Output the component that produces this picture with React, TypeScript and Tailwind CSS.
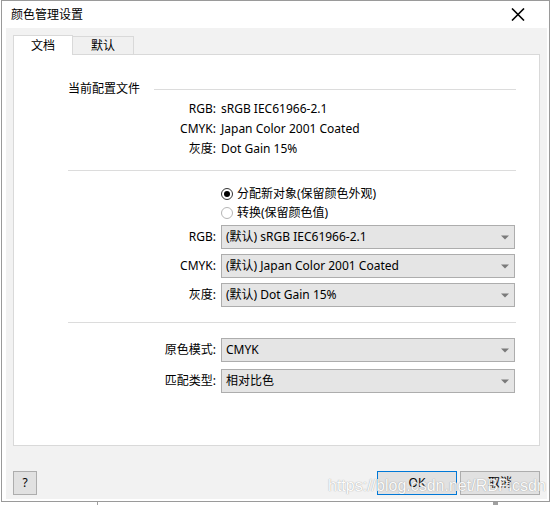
import React from "react";

const FONT = { fontFamily: '"Noto Sans", "Noto Sans CJK SC", sans-serif' };

function Arrow() {
  return (
    <svg width="8" height="5" viewBox="0 0 8 5" className="shrink-0">
      <path d="M0 0.5 H8 L4 4.5 Z" fill="#7a7a7a" />
    </svg>
  );
}

function Select({ text, h = "h-[24px]" }: { text: string; h?: string }) {
  return (
    <div
      className={`w-[294px] ${h} border border-[#adadad] bg-[#e5e5e5] flex items-center justify-between pl-[4px] pr-[5px] text-[12px] text-black`}
    >
      <span className="whitespace-nowrap">{text}</span>
      <Arrow />
    </div>
  );
}

function LabelRow({
  label,
  children,
  h,
}: {
  label: string;
  children: React.ReactNode;
  h: string;
}) {
  return (
    <div className={`flex items-center ${h}`}>
      <div className="w-[148px] text-right text-[12px] text-black whitespace-nowrap">
        {label}
      </div>
      <div className="ml-[5px] flex items-center">{children}</div>
    </div>
  );
}

function Radio({ checked, label }: { checked: boolean; label: string }) {
  return (
    <div className="flex items-center h-[19px] pl-[153px]">
      <div
        className={`w-[12px] h-[12px] rounded-full border flex items-center justify-center bg-white ${
          checked ? "border-[#333333]" : "border-[#b5b5b5]"
        }`}
      >
        {checked && <div className="w-[6px] h-[6px] rounded-full bg-black" />}
      </div>
      <span className="ml-[4px] text-[12px] text-black whitespace-nowrap">{label}</span>
    </div>
  );
}

export default function App() {
  return (
    <div className="w-[551px] h-[505px] bg-white flex flex-col overflow-hidden relative" style={FONT}>
      <div className="ml-[1px] w-[549px] h-[502px] border border-[#9a9a9a] flex flex-col bg-white">
        {/* title bar */}
        <div className="h-[27px] flex items-center justify-between pl-[9px] pr-[24px] shrink-0">
          <span className="text-[12px] text-black leading-none">颜色管理设置</span>
          <svg width="14" height="13" viewBox="0 0 14 13">
            <path d="M1 0.5 L13 12.5 M13 0.5 L1 12.5" stroke="#000" strokeWidth="1.6" />
          </svg>
        </div>
        {/* body */}
        <div className="flex-1 ml-[4px] mr-[2px] mb-[2px] bg-[#f2f2f2] flex flex-col pl-[7px] pr-[7px] pt-[7px] pb-[4px]">
          {/* tabs */}
          <div className="flex items-end h-[19px] relative z-10">
            <div className="w-[60px] h-[20px] mb-[-1px] bg-white border border-b-0 border-[#d9d9d9] flex items-center justify-center text-[12px] text-black">
              文档
            </div>
            <div className="w-[61px] h-[18px] bg-[#f0f0f0] border border-l-0 border-b-0 border-[#d9d9d9] flex items-center justify-center text-[12px] text-black">
              默认
            </div>
          </div>
          {/* panel */}
          <div className="h-[392px] bg-white border border-[#d9d9d9] flex flex-col pl-[54px] pr-[23px] pt-[24px]">
            <div className="flex items-center h-[20px]">
              <span className="text-[12px] text-black whitespace-nowrap">当前配置文件</span>
              <div className="flex-1 ml-[14px] h-px bg-[#dcdcdc]" />
            </div>
            <LabelRow label="RGB:" h="h-[20px]">
              <span className="text-[12px] text-black">sRGB IEC61966-2.1</span>
            </LabelRow>
            <LabelRow label="CMYK:" h="h-[20px]">
              <span className="text-[12px] text-black">Japan Color 2001 Coated</span>
            </LabelRow>
            <LabelRow label="灰度:" h="h-[20px]">
              <span className="text-[12px] text-black">Dot Gain 15%</span>
            </LabelRow>
            <div className="mt-[11px] h-px bg-[#dcdcdc]" />
            <div className="mt-[13px] flex flex-col">
              <Radio checked label="分配新对象(保留颜色外观)" />
              <Radio checked={false} label="转换(保留颜色值)" />
            </div>
            <div className="mt-[3px] flex flex-col gap-[5px]">
              <LabelRow label="RGB:" h="h-[24px]">
                <Select text="(默认) sRGB IEC61966-2.1" />
              </LabelRow>
              <LabelRow label="CMYK:" h="h-[24px]">
                <Select text="(默认) Japan Color 2001 Coated" />
              </LabelRow>
              <LabelRow label="灰度:" h="h-[24px]">
                <Select text="(默认) Dot Gain 15%" />
              </LabelRow>
            </div>
            <div className="mt-[15px] h-px bg-[#dcdcdc]" />
            <div className="mt-[15px] flex flex-col gap-[7px]">
              <LabelRow label="原色模式:" h="h-[24px]">
                <Select text="CMYK" />
              </LabelRow>
              <LabelRow label="匹配类型:" h="h-[24px]">
                <Select text="相对比色" />
              </LabelRow>
            </div>
          </div>
          {/* buttons */}
          <div className="mt-auto flex items-center h-[24px]">
            <div className="w-[24px] h-[24px] border border-[#adadad] bg-[#e1e1e1] flex items-center justify-center text-[12px] text-black">
              ?
            </div>
            <div className="flex-1" />
            <div className="w-[80px] h-[24px] border border-[#0078d7] bg-[#e1e1e1] flex items-center justify-center text-[12px] text-black">
              OK
            </div>
            <div className="ml-[3px] w-[80px] h-[24px] border border-[#adadad] bg-[#e1e1e1] flex items-center justify-center text-[12px] text-black">
              取消
            </div>
          </div>
        </div>
      </div>
      {/* background strip below window */}
      <div className="flex h-[3px]">
        <div className="ml-[97px] w-px bg-[#a0a0a0]" />
        <div className="ml-[395px] w-[5px] bg-[#a0a0a0]" />
      </div>
      {/* watermark */}
      <div
        className="absolute left-[328px] top-[476px] text-[16px] leading-[20px] text-white whitespace-nowrap"
        style={{
          fontFamily: '"Liberation Sans", Arial, sans-serif',
          textShadow: "0 0 1px rgba(120,120,120,0.55), 0 0 1px rgba(120,120,120,0.55)",
          opacity: 0.85,
        }}
      >
        https://blog.csdn.net/RBPicsdn
      </div>
    </div>
  );
}
